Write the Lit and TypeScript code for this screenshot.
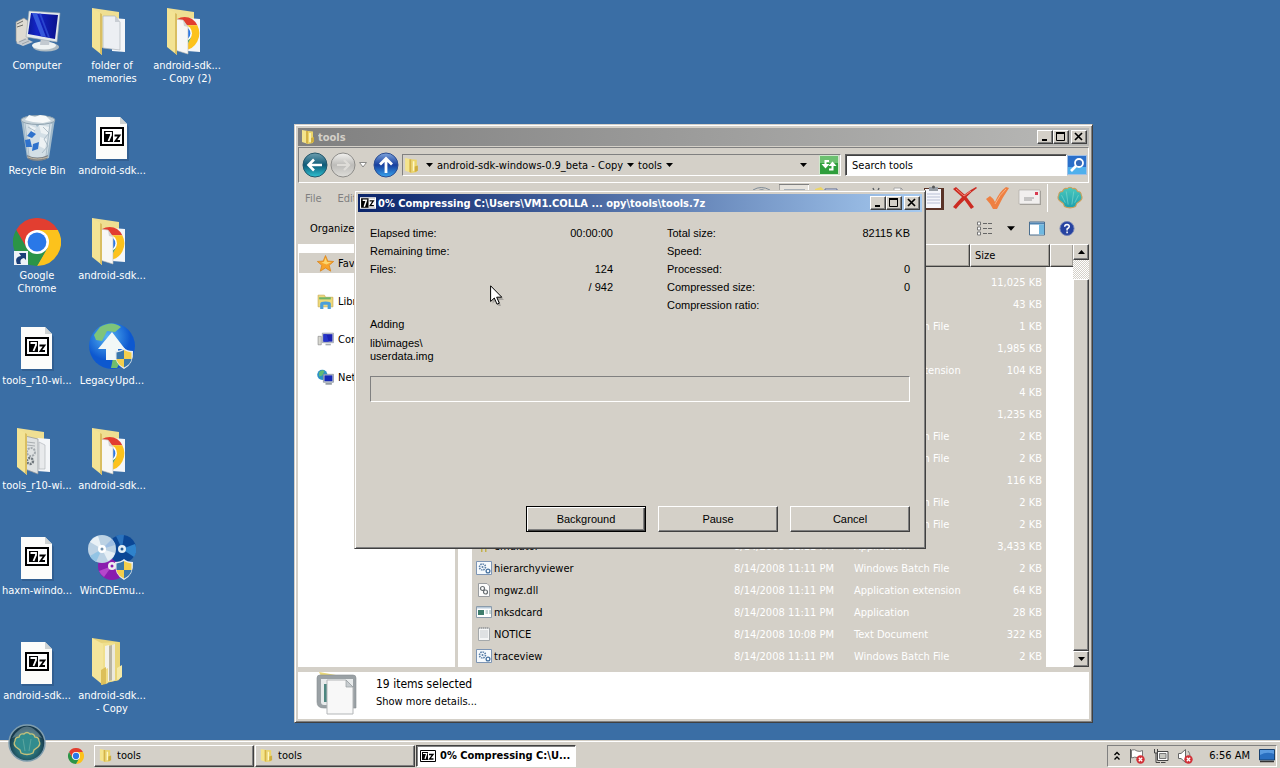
import { LitElement, html, svg, css, nothing, TemplateResult } from "lit";
import { customElement } from "lit/decorators.js";
import { classMap } from "lit/directives/class-map.js";

/* ---------- icon drawings ---------- */

const chromeMark = svg`
  <path fill="#e23e30" d="M3.2 12A24 24 0 0 1 44.8 12H24L13.6 30Z"/>
  <path fill="#fcc21c" d="M44.8 12A24 24 0 0 1 24 48L34.4 30 24 12Z"/>
  <path fill="#2b9447" d="M24 48A24 24 0 0 1 3.2 12L13.6 30H34.4Z"/>
  <circle cx="24" cy="24" r="12" fill="#fff"/><circle cx="24" cy="24" r="9.4" fill="#2a78e8"/>`;

const shieldMark = svg`
  <path d="M0 2Q6 2 9-1Q12 2 18 2Q19 15 9 20Q-1 15 0 2Z" fill="#e8eef2"/>
  <path d="M1.5 3.4Q6 3 9 1V10H1.5Z" fill="#3b78ab"/><path d="M9 1Q12 3 16.500 3.400V10H9Z" fill="#f3cf4c"/>
  <path d="M1.500 10H9V18.500Q2 15 1.500 10Z" fill="#f3cf4c"/><path d="M9 10H16.500Q16 15 9 18.500Z" fill="#3b78ab"/>`;

const chrome = html`<svg viewBox="0 0 48 48">${chromeMark}</svg>`;

const computer = html`<svg viewBox="0 0 48 48">
  <defs><linearGradient id="scr" x2="1"><stop offset="0" stop-color="#0b1a9c"/><stop offset=".3" stop-color="#1425c8"/><stop offset="1" stop-color="#0a128c"/></linearGradient></defs>
  <path d="M3 14L11 10 15 13V32L5 36 3 33Z" fill="#dedbd2" stroke="#8d8f8c" stroke-width=".6"/>
  <path d="M4 16L10 13M4 19L10 17" stroke="#6b6b66"/>
  <path d="M3 35L12 30 20 34 10 38Z" fill="#c8ccd0"/><path d="M6 34L13 31M9 36L16 33" stroke="#8b9298" stroke-width=".7"/>
  <ellipse cx="33" cy="39" rx="13" ry="4.500" fill="#aebbc2"/><ellipse cx="31" cy="37.500" rx="12" ry="4" fill="#eef3f3"/>
  <path d="M28 29L37 31 36 37H27Z" fill="#c2cad0"/>
  <path d="M16 3L47 5 44 34 13 29Z" fill="#e4eaed" stroke="#97a4ad" stroke-width=".6"/>
  <path d="M18 5L45 7 42 31 15 26Z" fill="url(#scr)"/>
  <path d="M19 5L24 5.500 33 29 28 28Z" fill="#3f66e4" opacity=".8"/><path d="M26 5.600L28 5.800 37 29.800 35 29.500Z" fill="#2f4fd6" opacity=".8"/>
</svg>`;

const bin = html`<svg viewBox="0 0 48 48">
  <path d="M8 6L42 6 36 45Q24 50 14 45Z" fill="#a9bfcd" opacity=".92"/>
  <path d="M11 10L20 7 24 14 31 8 39 11 34 44Q24 47 15 44Z" fill="#d3dfe6"/>
  <path d="M26 12L36 14 35 22 28 20ZM27 24L34 26 32 36 26 33ZM16 12L23 15 20 20Z" fill="#edf2f4"/>
  <ellipse cx="25" cy="7" rx="17" ry="4.500" fill="#c5d2d9" stroke="#8fa3b0"/>
  <path d="M12 7L16 2 22 4 27 2 33 3 38 8 30 10 20 9Z" fill="#f7f9f9"/>
  <path d="M30 14L36 20 31 26 35 33 29 40M15 14L22 18M37 10L33 43M12 10L16 43" stroke="#9fb2bf" fill="none" stroke-width=".8"/>
  <path d="M14 23L18 18 23 21 19 25ZM12 27L17 26 19 34 13 34ZM20 31L26 29 25 36 19 38Z" fill="#2f72cc"/>
  <path d="M14 42Q24 47 35 42L34 46Q24 50 15 46Z" fill="#7d8287"/><path d="M15 44Q24 48 35 44" stroke="#c3b9a4" fill="none"/>
</svg>`;

/* The archiver mark: a framed black 7 beside a z. */
const archive = html`<svg viewBox="0 0 48 48">
  <path d="M9 5.500H33L41 14V48H9Z" fill="#24456c" opacity=".35"/>
  <path d="M8 4H32L39 11V46H8Z" fill="#fcfcfa"/><path d="M32 4V11H39Z" fill="#cfd3d3"/>
  <path d="M13 15H35V32H13Z" fill="#fff" stroke="#000" stroke-width="2"/>
  <path d="M16 18H25V29H16Z" fill="#000"/>
  <path d="M17.500 20H23V22L20.500 28" stroke="#fff" stroke-width="1.800" fill="none"/>
  <path d="M26.500 22.500H31.500L27.500 28H32" stroke="#000" stroke-width="1.800" fill="none"/>
</svg>`;

const archiveSmall = html`<svg viewBox="0 0 16 12">
  <path d="M.5.5H15.500V11.500H.5Z" fill="#fff" stroke="#000"/>
  <path d="M2 2H8V10H2Z" fill="#000"/><path d="M3 3.500H6.700L5 9" stroke="#fff" stroke-width="1.200" fill="none"/>
  <path d="M9 4.500H13L9.500 9H13.500" stroke="#000" stroke-width="1.300" fill="none"/>
</svg>`;

const folder = (kind: "page" | "chrome" | "gear" | "stack") => html`<svg viewBox="0 0 48 48">
  ${kind === "stack"
    ? svg`<path d="M4 0L31 4V42L14 46Z" fill="#e6d27a"/><path d="M12 5L31 4V42L16 45Z" fill="#f0e08e"/>
      <path d="M17 8L21 7V43L17 45Z" fill="#f3f2ea"/><path d="M21 8L24 7V42L21 43Z" fill="#b9b5a4"/>
      <path d="M24 7L27 6V42L24 43Z" fill="#ece9dc"/>
      <path d="M27 5L32 4V41L27 43Z" fill="#e9d578"/><path d="M29 30L34 27V39L29 42Z" fill="#f5e9a6"/>
      <path d="M4 0L15 6V47L4 38Z" fill="#f4e59b"/><path d="M13 32L18 29V46L13 47Z" fill="#dcbf5a"/><path d="M18 31L20 30V45L18 46Z" fill="#f0dd88"/>`
    : svg`<path d="M4 0L31 4V30L14 40Z" fill="#efdf92"/><path d="M24 10L37 11V44L24 43Z" fill="#f4f6f8"/>`}
  ${kind === "page" ? svg`<path d="M15 8H27L32 14V42L15 40Z" fill="#eceff3" stroke="#aeb4ba" stroke-width=".7"/><path d="M27 8V14H32Z" fill="#c9ced4"/>` : nothing}
  ${kind === "chrome" ? svg`
      <g transform="translate(7 9) scale(.61 .68)">${chromeMark}</g>
      <path d="M12 11L20 12 25 19V46L12 42Z" fill="#f7f7f6" stroke="#c2bfb6" stroke-width=".6"/><path d="M20 12L21 18 25 19Z" fill="#d4d4d2"/>` : nothing}
  ${kind === "gear" ? svg`
      <path d="M12 8L25 11V46L12 41Z" fill="#dfe2e2" stroke="#8e9498" stroke-width=".7"/>
      <path d="M26 14L32 17V41H26Z" fill="#e8eaec" stroke="#a9afb4" stroke-width=".6"/>
      <path d="M14 14L22 15M14 17L22 18" stroke="#a8adb0"/>
      <circle cx="18" cy="24" r="4" fill="none" stroke="#a3a9ad" stroke-width="2" stroke-dasharray="2 1"/>
      <circle cx="17" cy="33" r="3" fill="none" stroke="#6f777c" stroke-width="2.400" stroke-dasharray="2 1"/>` : nothing}
  ${kind === "stack" ? nothing : svg`<path d="M4 0L14 6V47L4 39Z" fill="#f3e394"/><path d="M12 5L14 6V47L12 45Z" fill="#d9be62"/>`}
</svg>`;

const folderShape = svg`
  <path d="M2 1L8 2V15L2 13Z" fill="#f4e48c"/><path d="M6 2L8 2V15L6 14Z" fill="#d5b347"/>
  <path d="M8 2L13 2.500V14L8 15Z" fill="#ecd569"/><path d="M10 4V13" stroke="#fdf6c8" stroke-width="1.500"/>
  <path d="M11 9L14 8V13L11 14Z" fill="#cfae3e"/>`;
const folderSmall = html`<svg viewBox="0 0 16 16">${folderShape}</svg>`;

const chromeShortcut = html`<svg viewBox="0 0 48 48">${chromeMark}
  <path d="M1 33H15V47H1Z" fill="#eef2f6"/><path d="M4 46Q1 39 8 38L6 35H13V42L11 40Q6 41 8 46Z" fill="#1b3f78"/></svg>`;

const legacy = html`<svg viewBox="0 0 48 48">
  <defs><radialGradient id="globe" cx=".4" cy=".3"><stop offset="0" stop-color="#56b5f4"/><stop offset="1" stop-color="#0d58cf"/></radialGradient></defs>
  <circle cx="24" cy="23" r="23" fill="url(#globe)"/>
  <path d="M12 4Q24-3 33 4L27 9 19 8 14 18 8 17 6 12Z" fill="#7ec47a"/><path d="M25 35L33 38 29 45 23 45Z" fill="#6fbd6e"/>
  <path d="M24 9L37 26H30V37H18V26H10Z" fill="#f2f8f7"/>
  <g transform="translate(27 26)">${shieldMark}</g></svg>`;

const discs = html`<svg viewBox="0 0 48 48">
  <circle cx="24" cy="33" r="14" fill="#8a1cae"/><path d="M24 33L11 38A14 14 0 0 0 16 44Z" fill="#b646cc"/><circle cx="24" cy="33" r="4" fill="#eee"/><circle cx="24" cy="33" r="1.500" fill="#8a1cae"/>
  <circle cx="34" cy="16" r="14" fill="#0b4796"/><path d="M34 16L47 11A14 14 0 0 1 46 24Z" fill="#2f83cc"/><path d="M34 16L28 3A14 14 0 0 1 36 2Z" fill="#2a72bd"/>
  <circle cx="34" cy="16" r="4" fill="#e3eff6"/><circle cx="34" cy="16" r="1.500" fill="#235b96"/>
  <circle cx="14" cy="16" r="14" fill="#bcd2e4"/><path d="M14 16L2 9A14 14 0 0 1 10 3Z" fill="#e9f1f6"/><path d="M14 16L27 20A14 14 0 0 1 20 28Z" fill="#e6eff5"/>
  <path d="M14 16L24 6A14 14 0 0 1 27 12Z" fill="#9cbde2"/><path d="M14 16L2 23A14 14 0 0 0 8 29Z" fill="#92c4e4"/>
  <circle cx="14" cy="16" r="4" fill="#fff"/><circle cx="14" cy="16" r="1.500" fill="#7190ad"/>
  <g transform="translate(27 27)">${shieldMark}</g></svg>`;

const shellShape = svg`<path d="M10 22L9 19 5 16Q2 13 4 10Q4 6 8 6Q9 2 13 3Q16 0 19 3Q23 2 24 6Q28 6 28 10Q30 13 27 16L23 19 22 22Q16 25 10 22Z"/>`;

const orb = html`<svg viewBox="0 0 38 38">
  <defs><radialGradient id="orb" cx=".5" cy=".6"><stop offset="0" stop-color="#3aa0a0"/><stop offset=".7" stop-color="#24606c"/><stop offset="1" stop-color="#183a4c"/></radialGradient></defs>
  <circle cx="19" cy="19" r="18" fill="url(#orb)" stroke="#7f9dae" stroke-width="1.500"/>
  <path d="M4 14Q19-9 34 14Q19 8 4 14Z" fill="#a7c4cc" opacity=".4"/>
  <g transform="translate(3 7)" fill="#328c8e" stroke="#c5c07a" stroke-width="1.300">${shellShape}<path d="M14 20L12 8M18 20L20 8" stroke="#6fb0a6" stroke-width=".7"/></g></svg>`;

const shellIcon = html`<svg viewBox="0 0 32 26">
  <defs><linearGradient id="sh" x2="0" y2="1"><stop offset="0" stop-color="#4cc9bd"/><stop offset="1" stop-color="#1b9fae"/></linearGradient></defs>
  <g fill="url(#sh)" stroke="#c9a05c" stroke-width="1.200">${shellShape}<path d="M14 20L12 6M18 20L20 6M11 18L7 10M21 18L25 10" stroke="#7fd8cc" stroke-width=".7"/></g></svg>`;

const back = html`<svg viewBox="0 0 26 26">
  <defs><linearGradient id="bk" x2="0" y2="1"><stop offset="0" stop-color="#6e9fb0"/><stop offset=".5" stop-color="#0d5a78"/><stop offset="1" stop-color="#2fc3d2"/></linearGradient></defs>
  <circle cx="13" cy="13" r="12" fill="url(#bk)" stroke="#24566a"/><path d="M20 13H7M12 7.500L6.500 13 12 18.500" fill="none" stroke="#fff" stroke-width="2.600"/></svg>`;
const forward = html`<svg viewBox="0 0 26 26">
  <defs><linearGradient id="fw" x2="0" y2="1"><stop offset="0" stop-color="#f3f2f0"/><stop offset=".5" stop-color="#bdbcb9"/><stop offset="1" stop-color="#dfdeda"/></linearGradient></defs>
  <circle cx="13" cy="13" r="12" fill="url(#fw)" stroke="#8d8c89"/><path d="M7 13H19M14 8L19 13 14 18" fill="none" stroke="#dedcd8" stroke-width="2.200"/></svg>`;
const up = html`<svg viewBox="0 0 26 26">
  <defs><linearGradient id="up" x2="0" y2="1"><stop offset="0" stop-color="#7ea4dc"/><stop offset=".5" stop-color="#173f9f"/><stop offset="1" stop-color="#38a5ee"/></linearGradient></defs>
  <circle cx="13" cy="13" r="12" fill="url(#up)" stroke="#2c4d91"/><path d="M13 21V7M7 12.500L13 6.500 19 12.500" fill="none" stroke="#fff" stroke-width="2.800"/></svg>`;

const refresh = html`<svg viewBox="0 0 20 20"><path d="M.5.5H19.500V19.500H.5Z" fill="#2f9e3c" stroke="#cfe8cc"/><path d="M1 1H19V8H1Z" fill="#6cc070"/>
  <path d="M10 6H6.500V10" fill="none" stroke="#fff" stroke-width="2"/><path d="M2.500 9H10.500L6.500 13.500Z" fill="#fff"/>
  <path d="M10 14.500H13.500V10" fill="none" stroke="#fff" stroke-width="2"/><path d="M9.500 11H17.500L13.500 6.500Z" fill="#fff"/></svg>`;
const magnifier = html`<svg viewBox="0 0 20 20"><path d="M.5.5H19.500V19.500H.5Z" fill="#2a6fca" stroke="#9fbfe6"/><path d="M1 12H19V19H1Z" fill="#4fb0ec"/>
  <circle cx="12" cy="8" r="4" fill="#3569b8" stroke="#fff" stroke-width="1.800"/><path d="M9 11L4 16" stroke="#fff" stroke-width="2.600"/></svg>`;

const eye = html`<svg viewBox="0 0 30 28"><path d="M6 6Q14 1 23 6M10 7Q15 4 19 7" fill="none" stroke="#7f8c98"/></svg>`;
const views = html`<svg viewBox="0 0 30 28"><path d="M0 28V.5H30" fill="none" stroke="#808080"/><path d="M29.500 1V28" stroke="#fff"/><path d="M1 1H29V28H1Z" fill="#e6e3dd"/><path d="M5 6H26V20H5Z" fill="#e7edf4" stroke="#6a7c93"/><path d="M5 8H26M12 8V20" stroke="#8797ac"/></svg>`;
const newFolder = html`<svg viewBox="0 0 30 28"><path d="M4 5L10 3 13 6V20H4Z" fill="#ecd668"/><path d="M14 5H26V18H14Z" fill="#e9edf6" stroke="#5d6b93"/></svg>`;
const cut = html`<svg viewBox="0 0 30 28"><path d="M17 22L24 4M25 22L18 4" stroke="#5b6065" stroke-width="1.400"/></svg>`;
const copyPage = html`<svg viewBox="0 0 30 28"><path d="M7 4H14L18 8V22H7Z" fill="#fafafa" stroke="#a9a9a9"/><path d="M14 4V8H18" fill="none" stroke="#888"/></svg>`;
const paste = html`<svg viewBox="0 0 30 28"><path d="M5 4H25V26H5Z" fill="#5a3327"/><path d="M6 5H22V24H6Z" fill="#f5f6fb"/><path d="M8 10H21M8 13H21M8 16H21M8 19H21" stroke="#b8bfd4"/><path d="M10 3H19V7H10Z" fill="#999fa6"/><circle cx="14.500" cy="3" r="1.500" fill="#555"/></svg>`;
const remove = html`<svg viewBox="0 0 30 28"><path d="M2 5L5 3 13.500 10.500Q19 6 25 3L26 4Q20 8 15.500 13L23 23 20 25 13.500 16Q8 21 5 25L2 23Q7 17 11 13Z" fill="#cc2b22"/><path d="M5 5L13 12 20 7" stroke="#f08a78" fill="none"/></svg>`;
const check = html`<svg viewBox="0 0 30 28"><path d="M3 15L7 12Q10 14 12 18Q16 8 23 3L26 4Q19 14 14 25L10 25Q7 19 3 15Z" fill="#ee8042"/><path d="M12 20Q17 10 23 5" stroke="#f9b285" fill="none"/></svg>`;
const mail = html`<svg viewBox="0 0 30 28"><path d="M5 7H26V21H5Z" fill="#a29f98"/><path d="M4 6H25V20H4Z" fill="#f1efee" stroke="#a9a6a2" stroke-width=".6"/><path d="M20 8H23V11H20Z" fill="#d83c50"/><path d="M9 14H19M9 16H17" stroke="#9a9a9a"/></svg>`;

const details = html`<svg viewBox="0 0 16 14"><path d="M.5.5H3.500V3.500H.5ZM.5 5.500H3.500V8.500H.5ZM.5 10.500H3.500V13.500H.5Z" fill="#fff" stroke="#777"/><path d="M6 2H15M6 7H15M6 12H15" stroke="#666" stroke-dasharray="4 1"/></svg>`;
const preview = html`<svg viewBox="0 0 16 14"><path d="M.5.5H15.500V13.500H.5Z" fill="#fff" stroke="#4b6f90"/><path d="M1 1H15V3H1Z" fill="#4f83b0"/><path d="M10 3H15V13H10Z" fill="#6fb8e0"/></svg>`;
const help = html`<svg viewBox="0 0 16 16"><circle cx="8" cy="8" r="7.500" fill="#2642a0" stroke="#7483b8"/><path d="M5.500 6.200Q5.600 3.800 8 3.800Q10.500 3.900 10.400 6Q10.300 7.300 8.100 8.500V10M8.100 11.200V13" fill="none" stroke="#fff" stroke-width="1.600"/></svg>`;

const star = html`<svg viewBox="0 0 16 16"><path d="M8 .5L10.200 5.700 15.700 6.100 11.500 9.700 12.900 15.200 8 12.200 3.100 15.200 4.500 9.700.3 6.100 5.800 5.700Z" fill="#f7a32b" stroke="#d9831a" stroke-width=".7"/><path d="M8 2.500L9.500 6.500H13.500L9 9 4 7 6.500 6.500Z" fill="#fdd66e"/></svg>`;
const libraries = html`<svg viewBox="0 0 16 16"><path d="M1 2H7L8 4H15V13H1Z" fill="#eed97a" stroke="#c4a74a" stroke-width=".6"/><path d="M2 4H13V6H2Z" fill="#6fb46a"/><path d="M3 15V10Q3 8 8 8Q13 8 13 10V15H10V11H6V15Z" fill="#4b9fdb"/></svg>`;
const pc = html`<svg viewBox="0 0 16 16"><path d="M1 5H4V13H1Z" fill="#d7d7d0" stroke="#888" stroke-width=".6"/><path d="M5 2H15.500V11H5Z" fill="#c9cfd8" stroke="#8b93a0" stroke-width=".6"/><path d="M6 3H14.500V10H6Z" fill="#1a22b4"/><path d="M6 3H9L11 10H6Z" fill="#2634c8"/><path d="M8 12H13V13.500H8Z" fill="#a4abb2"/></svg>`;
const network = html`<svg viewBox="0 0 16 16"><circle cx="5" cy="5.500" r="4.800" fill="#2b91c8"/><path d="M2 3Q5 0 7 2L5 6 2 7Z" fill="#62bb74"/><path d="M6 5H15.500V12.500H6Z" fill="#c5ccd6" stroke="#77828f" stroke-width=".6"/><path d="M7 6H14.500V11.500H7Z" fill="#1629b8"/><path d="M8 14H14" stroke="#8b949c" stroke-width="1.500"/></svg>`;

const batch = html`<svg viewBox="0 0 16 14"><path d="M.5.5H15.500V13.500H.5Z" fill="#f6fafd" stroke="#7d95b4"/><circle cx="6.500" cy="6" r="3" fill="none" stroke="#5a7fa8" stroke-width="1.600" stroke-dasharray="1.500 .8"/><circle cx="6.500" cy="6" r="1" fill="#5a7fa8"/><circle cx="12" cy="10" r="1.900" fill="none" stroke="#4672a0" stroke-width="1.300"/></svg>`;
const dll = html`<svg viewBox="0 0 16 14"><path d="M2.500.5H11L13.500 3V13.500H2.500Z" fill="#fcfcfc" stroke="#9a9da0"/><circle cx="6.500" cy="5.500" r="2" fill="none" stroke="#666c70" stroke-width="1.200"/><circle cx="9.500" cy="9" r="2" fill="none" stroke="#666c70" stroke-width="1.200"/></svg>`;
const exe = html`<svg viewBox="0 0 16 14"><path d="M.5 1.500H15.500V12.500H.5Z" fill="#fff" stroke="#8a9bab"/><path d="M1 2H15V3.500H1Z" fill="#b8c9d8"/><path d="M2 5H8V10H2Z" fill="#3f7d6c"/><path d="M9.500 6H12M9.500 8H12M14 5V9" stroke="#8aa"/></svg>`;
const note = html`<svg viewBox="0 0 16 14"><path d="M2.500 1H13.500V13.500H2.500Z" fill="#f5f6f6" stroke="#a4a8aa"/><path d="M4 4H12M4 6H12M4 8H12M4 10H12" stroke="#c8cccf"/><path d="M3 1H13" stroke="#888" stroke-dasharray="1 1"/></svg>`;
const emulator = html`<svg viewBox="0 0 16 14"><path d="M5 1H6.500V13H5ZM9 1H10.500V13H9Z" fill="#c3b04a"/></svg>`;

const pages = html`<svg viewBox="0 0 42 44">
  <path d="M3 0L20 3V10H8Z" fill="#e8d777"/>
  <path d="M1 6Q1 3 4 3H37Q40 3 40 6V36H8Q1 36 1 30Z" fill="#9aa1a5" stroke="#868d91" stroke-width=".6"/><path d="M5 7H37V33H8Q5 33 5 30Z" fill="#e8ebec"/>
  <path d="M8 12H11V30H8Z" fill="#4d8680"/>
  <path d="M11 8H30L37 15V42H11Z" fill="#f8f8f8" stroke="#b3b6b8"/><path d="M30 8V15H37Z" fill="#c7cccf" stroke="#989da0" stroke-width=".7"/></svg>`;

const bad = svg`<circle cx="11.500" cy="11.500" r="4.200" fill="#d22f36"/><path d="M9.800 9.800L13.200 13.200M13.200 9.800L9.800 13.200" stroke="#fff" stroke-width="1.300"/>`;
const flag = html`<svg viewBox="0 0 16 16"><path d="M1.500 1V15" stroke="#555"/><path d="M2.500 2Q6 1 8 3Q11 4 13.500 2.500V10Q10 11 8 9.500Q6 8.500 2.500 10Z" fill="#fff" stroke="#777"/>${bad}</svg>`;
const plug = html`<svg viewBox="0 0 16 16"><path d="M4.500 3.500H15V12.500H4.500Z" fill="#fff" stroke="#444"/><path d="M6.500 5.500H13V10.500H6.500Z" fill="#c7c7c1" stroke="#777"/><path d="M8 14.500H12.500" stroke="#444"/><path d="M1.500 1V5H4.500V1M3 5V14.500H7" fill="none" stroke="#444"/></svg>`;
const speaker = html`<svg viewBox="0 0 16 16"><path d="M1.500 5.500H4L8.500 1.500V14.500L4 10.500H1.500Z" fill="#fff" stroke="#666"/><path d="M11 3Q13 5 13 8" fill="none" stroke="#777"/>${bad}</svg>`;
const screen = html`<svg viewBox="0 0 16 14"><path d="M.5.5H15.500V11H.5Z" fill="#2a6fc0" stroke="#17406f"/><path d="M1 6Q8 2 15 5V1H1Z" fill="#5a9be0"/><path d="M1 12.500H15" stroke="#333" stroke-width="1.500"/></svg>`;
const chevrons = html`<svg viewBox="0 0 8 10"><path d="M1.500 4L4 1.500 6.500 4M1.500 8.500L4 6 6.500 8.500" fill="none" stroke="#000" stroke-width="1.400"/></svg>`;
const caret = html`<svg class="caret" viewBox="0 0 7 4"><path d="M0 0H7L3.500 4Z"/></svg>`;
const pointer = html`<svg viewBox="0 0 14 22"><path d="M2.500 2.500V18.500L6 15.500 8.500 21H11L9 15H14Z" fill="#555" opacity=".35"/>
  <path d="M.6.8V16.500L4.300 13 7 19.200 9.300 18.200 6.700 12.200H11.800Z" fill="#fff" stroke="#000"/></svg>`;

/* ---------- data ---------- */

interface Shortcut { lines: string[]; icon: TemplateResult }
const SHORTCUTS: Shortcut[] = [
  { lines: ["Computer"], icon: computer },
  { lines: ["Recycle Bin"], icon: bin },
  { lines: ["Google", "Chrome"], icon: chromeShortcut },
  { lines: ["tools_r10-wi..."], icon: archive },
  { lines: ["tools_r10-wi..."], icon: folder("gear") },
  { lines: ["haxm-windo..."], icon: archive },
  { lines: ["android-sdk..."], icon: archive },
  { lines: ["folder of", "memories"], icon: folder("page") },
  { lines: ["android-sdk..."], icon: archive },
  { lines: ["android-sdk..."], icon: folder("chrome") },
  { lines: ["LegacyUpd..."], icon: legacy },
  { lines: ["android-sdk..."], icon: folder("chrome") },
  { lines: ["WinCDEmu..."], icon: discs },
  { lines: ["android-sdk...", "- Copy"], icon: folder("stack") },
  { lines: ["android-sdk...", "- Copy (2)"], icon: folder("chrome") },
];

const BAT = "Windows Batch File";
const DLL = "Application extension";
const DATE = "8/14/2008 11:11 PM";
type FileRow = [string, string, string, string, TemplateResult | typeof nothing];
const FILES: FileRow[] = [
  ["", "", "", "11,025 KB", nothing],
  ["", "", "", "43 KB", nothing],
  ["", "", BAT, "1 KB", nothing],
  ["", "", "", "1,985 KB", nothing],
  ["", "", DLL, "104 KB", nothing],
  ["", "", "", "4 KB", nothing],
  ["", "", "", "1,235 KB", nothing],
  ["", "", BAT, "2 KB", nothing],
  ["", "", BAT, "2 KB", nothing],
  ["", "", "", "116 KB", nothing],
  ["", "", BAT, "2 KB", nothing],
  ["", "", BAT, "2 KB", nothing],
  ["emulator", DATE, "Application", "3,433 KB", emulator],
  ["hierarchyviewer", DATE, BAT, "2 KB", batch],
  ["mgwz.dll", DATE, DLL, "64 KB", dll],
  ["mksdcard", DATE, "Application", "28 KB", exe],
  ["NOTICE", "8/14/2008 10:08 PM", "Text Document", "322 KB", note],
  ["traceview", DATE, BAT, "2 KB", batch],
];

const base = css`
  * { box-sizing: border-box; }
  button, input { font: inherit; color: inherit; margin: 0; padding: 0; border: 0; border-radius: 0; background: none; }
  svg { display: block; flex: none; }
  .caret { width: 7px; height: 4px; }
`;

/* ---------- window frame ---------- */

@customElement("window-frame")
class WindowFrame extends LitElement {
  static properties = { heading: {}, active: { type: Boolean } };
  declare heading: string;
  declare active: boolean;

  static styles = [base, css`
    :host {
      display: flex; flex-direction: column; box-sizing: border-box; padding: 3px;
      background: #d4d0c8; border: 1px solid; border-color: #d4d0c8 #404040 #404040 #d4d0c8;
      box-shadow: inset 1px 1px #fff, inset -1px -1px #808080;
    }
    .title {
      display: flex; align-items: center; gap: 2px; height: 18px; flex: none; padding: 0 2px;
      font-weight: bold; color: #d4d0c8; background: linear-gradient(90deg, #808080, #b8b8b6);
    }
    .title.active { color: #fff; background: linear-gradient(90deg, #0a246a, #a6caf0); }
    .text { flex: 1; min-width: 0; overflow: hidden; white-space: nowrap; }
    .buttons { display: flex; }
    .buttons button {
      width: 16px; height: 14px; background: #d4d0c8; border: 1px solid; border-color: #fff #404040 #404040 #fff;
      box-shadow: inset -1px -1px #808080; display: grid; place-items: center;
    }
    .buttons button:last-child { margin-left: 2px; }
    .buttons svg { width: 12px; height: 10px; }
  `];

  render() {
    return html`
      <div class=${classMap({ title: true, active: this.active })}>
        <slot name="icon"></slot>
        <span class="text">${this.heading}</span>
        <div class="buttons">
          <button aria-label="Minimize"><svg viewBox="0 0 12 10"><path d="M3 7H8V9H3Z"/></svg></button>
          <button aria-label="Maximize"><svg viewBox="0 0 12 10"><path d="M1.500 1H9.500V8.500H1.500Z" fill="none" stroke="#000"/><path d="M1 0H10V2H1Z"/></svg></button>
          <button aria-label="Close"><svg viewBox="0 0 12 10"><path d="M2 1L9 8M9 1L2 8" stroke="#000" stroke-width="1.700"/></svg></button>
        </div>
      </div>
      <slot></slot>`;
  }
}

/* ---------- file browser ---------- */

@customElement("file-browser")
class FileBrowser extends LitElement {
  static styles = [base, css`
    :host { display: flex; flex-direction: column; flex: 1; min-height: 0; }
    .nav {
      display: flex; align-items: center; height: 36px; margin: 1px 0; padding: 0 1px 0 3px; gap: 4px; flex: none;
      border: 1px solid; border-color: #808080 #fff #fff #808080;
    }
    .round svg { width: 26px; height: 26px; }
    .round + .round { margin-left: -2px; }
    .history { margin: 0 2px 0 -1px; }
    .history svg { width: 8px; height: 6px; }
    .address {
      display: flex; align-items: center; gap: 4px; flex: 1; height: 22px; margin-left: -1px; padding-right: 1px;
      border: 1px solid; border-color: #808080 #fff #fff #808080; white-space: nowrap;
    }
    .address > svg:first-child { width: 17px; height: 17px; }
    .address .crumb { display: flex; align-items: center; gap: 4px; }
    .address .first { margin-left: 2px; }
    .drop { margin-left: auto; margin-right: 8px; }
    .square svg { width: 20px; height: 20px; }
    .search { display: flex; align-items: center; height: 22px; }
    .search input {
      width: 222px; height: 22px; padding: 0 6px; background: #fff;
      border: 1px solid; border-color: #606060 #fff #fff #606060; box-shadow: inset 1px 1px #404040;
    }
    .menu { display: flex; align-items: center; height: 30px; flex: none; padding: 0 4px 2px 7px; color: #808080; }
    .menu > button { margin-right: 16px; }
    .tools { display: flex; gap: 2px; margin-left: auto; }
    .tools svg { width: 30px; height: 28px; }
    .gap { width: 10px; }
    .rule { width: 6px; border-left: 1px solid #fff; }
    .commands { display: flex; align-items: center; height: 30px; flex: none; padding: 0 14px 2px 12px; }
    .commands svg { height: 15px; width: 16px; }
    .commands .caret { width: 8px; height: 5px; }
    .right { display: flex; align-items: center; gap: 14px; margin-left: auto; }
    .main { display: flex; flex: 1; min-height: 0; overflow: hidden; margin-bottom: 5px; }
    .places { width: 157px; flex: none; margin: 0 3px 0 0; padding: 9px 1px; background: #fff; list-style: none; display: flex; flex-direction: column; gap: 19px; }
    .places li { height: 20px; margin-bottom: -1px; padding-left: 18px; display: flex; align-items: center; }
    .places li.current { background: #d4d0c8; }
    .places a { display: flex; align-items: center; gap: 4px; color: #000; text-decoration: none; }
    .places svg { width: 17px; height: 17px; }
    .list { flex: 1; min-width: 0; overflow: hidden; background: #fff; }
    table { width: 100%; table-layout: fixed; border-collapse: separate; border-spacing: 0; }
    th {
      height: 23px; padding: 0 4px; text-align: left; font-weight: normal; background: #d4d0c8;
      border: 1px solid; border-color: #fff #404040 #404040 #fff; box-shadow: inset -1px -1px #a09d96;
    }
    td { height: 22px; padding: 0 4px; background: #d4d0c8; color: #fff; white-space: nowrap; }
    .tail td { height: 4px; }
    td.edge { background: #fff; padding: 0; }
    td.name { color: #000; }
    td.name div { display: flex; align-items: center; gap: 2px; }
    td.name svg { width: 16px; height: 14px; }
    td.size { text-align: right; border-right: 4px solid #fff; }
    .c-edge { width: 14px; } .c-name { width: 258px; } .c-type { width: 120px; } .c-size { width: 80px; } .c-rest { width: 24px; }
    .bar {
      width: 16px; flex: none; display: flex; flex-direction: column;
      background: repeating-conic-gradient(#fff 0 25%, #d4d0c8 0 50%) 0 0 / 2px 2px;
    }
    .bar button {
      height: 16px; flex: none; display: grid; place-items: center; background: #d4d0c8;
      border: 1px solid; border-color: #fff #404040 #404040 #fff; box-shadow: inset -1px -1px #808080;
    }
    .bar button.thumb { flex: 1; margin-top: 19px; }
    .flip { transform: rotate(180deg); }
    .status { display: flex; gap: 18px; height: 47px; flex: none; padding-left: 18px; background: #fff; }
    .status > svg { width: 42px; height: 44px; }
    .status p { margin: 0; line-height: 18px; }
    .status .count { font-size: 12px; margin-top: 3px; }
  `];

  render() {
    const places: [string, TemplateResult][] = [["Favorites", star], ["Libraries", libraries], ["Computer", pc], ["Network", network]];
    return html`
      <nav class="nav">
        <button class="round" aria-label="Back">${back}</button>
        <button class="round" aria-label="Forward">${forward}</button>
        <button class="history" aria-label="Recent pages"><svg viewBox="0 0 8 6"><path d="M.5.5H7.500L4 5Z" fill="#fff" stroke="#8a8a88"/></svg></button>
        <button class="round" aria-label="Up">${up}</button>
        <div class="address">
          ${folderSmall}
          <button class="crumb first">${caret}android-sdk-windows-0.9_beta - Copy</button>
          <button class="crumb">${caret}tools</button>
          ${caret}
          <button class="drop" aria-label="Previous locations">${caret}</button>
          <button class="square" aria-label="Refresh">${refresh}</button>
        </div>
        <div class="search">
          <input type="text" aria-label="Search" value="Search tools">
          <button class="square" aria-label="Go">${magnifier}</button>
        </div>
      </nav>
      <div class="menu">
        <button>File</button><button>Edit</button>
        <div class="tools">
          <button aria-label="Preview">${eye}</button><button aria-label="Views">${views}</button><button aria-label="New folder">${newFolder}</button>
          <span class="gap"></span>
          <button aria-label="Cut">${cut}</button><button aria-label="Copy">${copyPage}</button><button aria-label="Paste">${paste}</button>
          <button aria-label="Delete">${remove}</button><button aria-label="Properties">${check}</button><button aria-label="E-mail">${mail}</button>
          <span class="rule"></span>
          <button aria-label="Classic Shell">${shellIcon}</button>
        </div>
      </div>
      <div class="commands">
        <button>Organize</button>
        <div class="right">
          <button aria-label="Details">${details}</button>
          <button aria-label="More views">${caret}</button>
          <button aria-label="Preview pane">${preview}</button>
          <button aria-label="Help">${help}</button>
        </div>
      </div>
      <div class="main">
        <ul class="places">
          ${places.map(([name, icon], i) => html`<li class=${classMap({ current: i === 0 })}><a href="#">${icon}${name}</a></li>`)}
        </ul>
        <div class="list">
          <table>
            <colgroup><col class="c-edge"><col class="c-name"><col class="c-type"><col class="c-type"><col class="c-size"><col class="c-rest"></colgroup>
            <thead><tr><th colspan="2"></th><th></th><th></th><th>Size</th><th></th></tr></thead>
            <tbody>
              <tr class="tail"><td class="edge"></td><td></td><td></td><td></td><td class="size"></td><td class="edge"></td></tr>
              ${FILES.map(([name, date, type, size, icon]) => html`<tr>
                <td class="edge"></td><td class="name"><div>${icon}${name}</div></td><td>${date}</td><td>${type}</td>
                <td class="size">${size}</td><td class="edge"></td></tr>`)}
            </tbody>
          </table>
        </div>
        <div class="bar">
          <button aria-label="Scroll up"><svg class="caret flip" viewBox="0 0 7 4"><path d="M0 0H7L3.500 4Z"/></svg></button>
          <button class="thumb" aria-label="Scroll position"></button>
          <button aria-label="Scroll down">${caret}</button>
        </div>
      </div>
      <div class="status">
        ${pages}
        <div><p class="count">19 items selected</p><p>Show more details...</p></div>
      </div>`;
  }
}

/* ---------- compression progress ---------- */

@customElement("progress-panel")
class ProgressPanel extends LitElement {
  static styles = [base, css`
    :host { display: flex; flex-direction: column; flex: 1; padding: 12px 12px 13px; font-family: "Liberation Sans", Arial, sans-serif; }
    .stats { display: grid; grid-template-columns: 1fr 1fr; gap: 0 54px; line-height: 18px; }
    dl { margin: 0; }
    .row { display: flex; justify-content: space-between; }
    dd { margin: 0; }
    .stage { margin: 1px 0 4px; line-height: 18px; }
    .file { margin: 0 0 13px; line-height: 13px; }
    progress {
      display: block; appearance: none; width: 100%; height: 26px; background: #d4d0c8;
      border: 1px solid; border-color: #808080 #fff #fff #808080;
    }
    progress::-webkit-progress-bar { background: #d4d0c8; }
    progress::-webkit-progress-value { background: #0a246a; }
    .actions { display: flex; justify-content: flex-end; gap: 12px; margin-top: auto; }
    .actions button {
      width: 120px; height: 26px; border: 1px solid; border-color: #fff #404040 #404040 #fff; box-shadow: inset -1px -1px #808080;
    }
    .actions button.default { border-color: #000; box-shadow: inset 1px 1px #fff, inset -1px -1px #404040, inset -2px -2px #808080; }
  `];

  private group(rows: [string, string][]) {
    return html`<dl>${rows.map(([k, v]) => html`<div class="row"><dt>${k}</dt><dd>${v}</dd></div>`)}</dl>`;
  }

  render() {
    return html`
      <div class="stats">
        ${this.group([["Elapsed time:", "00:00:00"], ["Remaining time:", ""], ["Files:", "124"], ["", "/ 942"]])}
        ${this.group([["Total size:", "82115 KB"], ["Speed:", ""], ["Processed:", "0"], ["Compressed size:", "0"], ["Compression ratio:", ""]])}
      </div>
      <p class="stage">Adding</p>
      <p class="file">lib\\images\\<br>userdata.img</p>
      <progress aria-label="Compression progress" value="0" max="100"></progress>
      <div class="actions"><button class="default">Background</button><button>Pause</button><button>Cancel</button></div>`;
  }
}

/* ---------- desktop ---------- */

@customElement("app-root")
class AppRoot extends LitElement {
  static styles = [base, css`
    :host {
      display: flex; flex-direction: column; height: 100vh; overflow: hidden; background: #3a6ea5; color: #000;
      font: 11px/13px "DejaVu Sans Condensed", "DejaVu Sans", sans-serif;
    }
    .desktop { position: relative; flex: 1; min-height: 0; }
    .shortcuts { display: grid; grid-auto-flow: column; grid-template-rows: repeat(7, 105px); grid-auto-columns: 72px; column-gap: 3px; padding-left: 1px; }
    .shortcut { display: flex; flex-direction: column; align-items: center; gap: 3px; padding-top: 8px; color: #fff; text-decoration: none; text-align: center; white-space: nowrap; }
    .shortcut svg { width: 48px; height: 48px; }
    .explorer { position: absolute; left: 294px; top: 124px; width: 799px; height: 599px; }
    .dialog { position: absolute; left: 354px; top: 190px; width: 572px; height: 359px; }
    .explorer > svg { width: 16px; height: 16px; }
    .dialog > svg { width: 16px; height: 12px; }
    .pointer { position: absolute; left: 490px; top: 285px; }
    .pointer svg { width: 14px; height: 22px; }
    .taskbar { position: relative; display: flex; align-items: center; height: 28px; padding: 2px 3px 0 76px; background: #d4d0c8; border-top: 1px solid #d4d0c8; box-shadow: inset 0 1px #fff; }
    .start { position: absolute; left: 8px; top: -17px; }
    .start svg { width: 38px; height: 38px; }
    .pinned { margin-left: -8px; }
    .pinned svg { width: 16px; height: 16px; }
    .tasks { display: flex; gap: 1px; margin-left: 10px; }
    .task {
      display: flex; align-items: center; gap: 4px; width: 160px; height: 22px; padding-left: 3px; white-space: nowrap; overflow: hidden;
      border: 1px solid; border-color: #fff #404040 #404040 #fff; box-shadow: inset -1px -1px #808080;
    }
    .task svg { width: 15px; height: 15px; }
    .task.pressed {
      font-weight: bold; background: #fff;
      border-color: #404040 #fff #fff #404040; box-shadow: inset 1px 1px #808080;
    }
    .task.pressed svg { width: 16px; height: 12px; }
    .tray { display: flex; align-items: center; gap: 8px; height: 22px; margin-left: auto; padding: 0 1px 0 5px; border: 1px solid; border-color: #808080 #fff #fff #808080; }
    .tray svg { width: 16px; height: 16px; }
    .tray .more svg { width: 8px; height: 10px; }
    .tray time { margin: 0 1px 0 8px; }
  `];

  render() {
    return html`
      <main class="desktop">
        <div class="shortcuts">
          ${SHORTCUTS.map((s) => html`<a class="shortcut" href="#">${s.icon}<span>${s.lines.map((l, i) => html`${i ? html`<br>` : nothing}${l}`)}</span></a>`)}
        </div>
        <window-frame class="explorer" heading="tools">
          <svg slot="icon" viewBox="0 0 16 16">${folderShape}</svg>
          <file-browser></file-browser>
        </window-frame>
        <window-frame class="dialog" active heading=${"0% Compressing C:\\Users\\VM1.COLLA ... opy\\tools\\tools.7z"}>
          <svg slot="icon" viewBox="0 0 15 11"><path d="M.5.5H14.500V10.500H.5Z" fill="#000" stroke="#fff"/><path d="M2.500 3H6L4 9" stroke="#fff" stroke-width="1.400" fill="none"/><path d="M8 1H14V10H8Z" fill="#fff"/><path d="M9 3.500H12.500L9.500 8H13" stroke="#000" stroke-width="1.200" fill="none"/></svg>
          <progress-panel></progress-panel>
        </window-frame>
        <div class="pointer">${pointer}</div>
      </main>
      <footer class="taskbar">
        <button class="start" aria-label="Start">${orb}</button>
        <button class="pinned" aria-label="Google Chrome">${chrome}</button>
        <div class="tasks">
          <button class="task">${folderSmall}tools</button>
          <button class="task">${folderSmall}tools</button>
          <button class="task pressed">${archiveSmall}0% Compressing C:\\U...</button>
        </div>
        <div class="tray">
          <button class="more" aria-label="Show hidden icons">${chevrons}</button>
          ${flag}${plug}${speaker}
          <time>6:56 AM</time>
          ${screen}
        </div>
      </footer>`;
  }
}
